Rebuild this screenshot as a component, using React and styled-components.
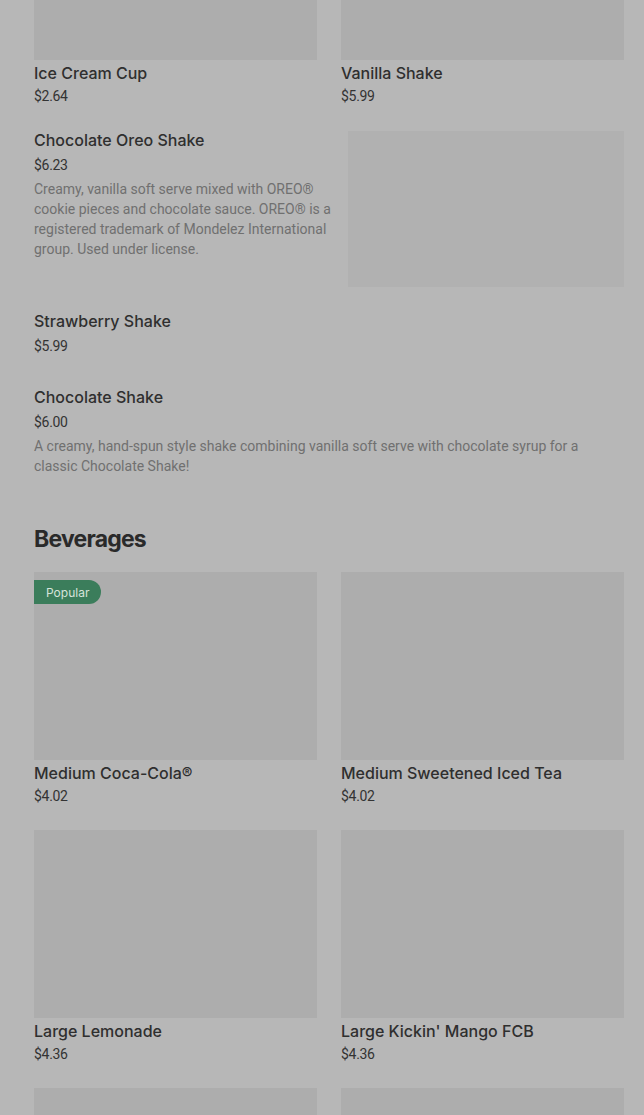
import React from "react";
import styled, { createGlobalStyle } from "styled-components";

const Global = createGlobalStyle`
  body {
    margin: 0;
    background: #b7b7b7;
    font-family: Inter, "Liberation Sans", sans-serif;
    color: #2f2f2f;
    overflow: hidden;
  }
`

const Page = styled.div`
  padding: 0 20px 0 34px;
  margin-top: -128px;
`
const Grid = styled.div`
  display: grid;
  grid-template-columns: 1fr 1fr;
  column-gap: 24px;
  row-gap: 24px;
`
const Card = styled.div`
  display: flex;
  flex-direction: column;
`
const Thumb = styled.div`
  position: relative;
  height: 188px;
  background: #adadad;
  margin-bottom: 3px;
`
const Badge = styled.span`
  position: absolute;
  top: 8px;
  left: 0;
  height: 24px;
  padding: 0 12px;
  display: flex;
  align-items: center;
  background: #3b7d5b;
  color: #d6e3da;
  font-size: 12px;
  border-radius: 0 12px 12px 0;
`
const Name = styled.div`
  font-size: 16px;
  font-weight: 500;
  line-height: 20px;
  color: #2f2f2f;
  white-space: nowrap;
`
const Price = styled.div`
  font-family: Roboto, "Liberation Sans", sans-serif;
  font-size: 14px;
  line-height: 20px;
  margin-top: 3px;
  color: #333;
  letter-spacing: -0.3px;
`
const List = styled.div`
  display: flex;
  flex-direction: column;
  gap: 24px;
  margin-top: 24px;
`
const Row = styled.div`
  display: flex;
  gap: 10px;
  min-height: 52px;
`
const Info = styled.div`
  flex: 1;
`
const RowPrice = styled(Price)`
  margin-top: 5px;
`
const Desc = styled.div`
  font-family: Roboto, "Liberation Sans", sans-serif;
  font-size: 14px;
  line-height: 20px;
  margin-top: 4px;
  color: #707070;
`
const RowImage = styled.div`
  width: 276px;
  height: 156px;
  flex-shrink: 0;
  margin-top: 1px;
  background: #b1b1b1;
`
const Heading = styled.h2`
  margin: 47px 0 17px;
  font-size: 23px;
  line-height: 32px;
  font-weight: 700;
  letter-spacing: -0.8px;
  color: #2a2a2a;
`

const shakes = [
  { name: "Ice Cream Cup", price: "$2.64" },
  { name: "Vanilla Shake", price: "$5.99" },
]

const rows = [
  {
    name: "Chocolate Oreo Shake",
    price: "$6.23",
    desc: "Creamy, vanilla soft serve mixed with OREO® cookie pieces and chocolate sauce. OREO® is a registered trademark of Mondelez International group. Used under license.",
    image: true,
  },
  { name: "Strawberry Shake", price: "$5.99" },
  {
    name: "Chocolate Shake",
    price: "$6.00",
    desc: "A creamy, hand-spun style shake combining vanilla soft serve with chocolate syrup for a classic Chocolate Shake!",
  },
]

const drinks = [
  { name: "Medium Coca-Cola®", price: "$4.02", popular: true },
  { name: "Medium Sweetened Iced Tea", price: "$4.02" },
  { name: "Large Lemonade", price: "$4.36" },
  { name: "Large Kickin' Mango FCB", price: "$4.36" },
  { name: "Medium Lemonade", price: "$3.69" },
  { name: "Medium Kickin' Mango FCB", price: "$3.69" },
]

function GridCard({ item }) {
  return (
    <Card>
      <Thumb>{item.popular && <Badge>Popular</Badge>}</Thumb>
      <Name>{item.name}</Name>
      <Price>{item.price}</Price>
    </Card>
  )
}

export default function App() {
  return (
    <>
      <Global />
      <Page>
        <Grid>
          {shakes.map(s => <GridCard key={s.name} item={s} />)}
        </Grid>
        <List>
          {rows.map(r => (
            <Row key={r.name}>
              <Info>
                <Name>{r.name}</Name>
                <RowPrice>{r.price}</RowPrice>
                {r.desc && <Desc>{r.desc}</Desc>}
              </Info>
              {r.image && <RowImage />}
            </Row>
          ))}
        </List>
        <Heading>Beverages</Heading>
        <Grid>
          {drinks.map(d => <GridCard key={d.name} item={d} />)}
        </Grid>
      </Page>
    </>
  )
}
